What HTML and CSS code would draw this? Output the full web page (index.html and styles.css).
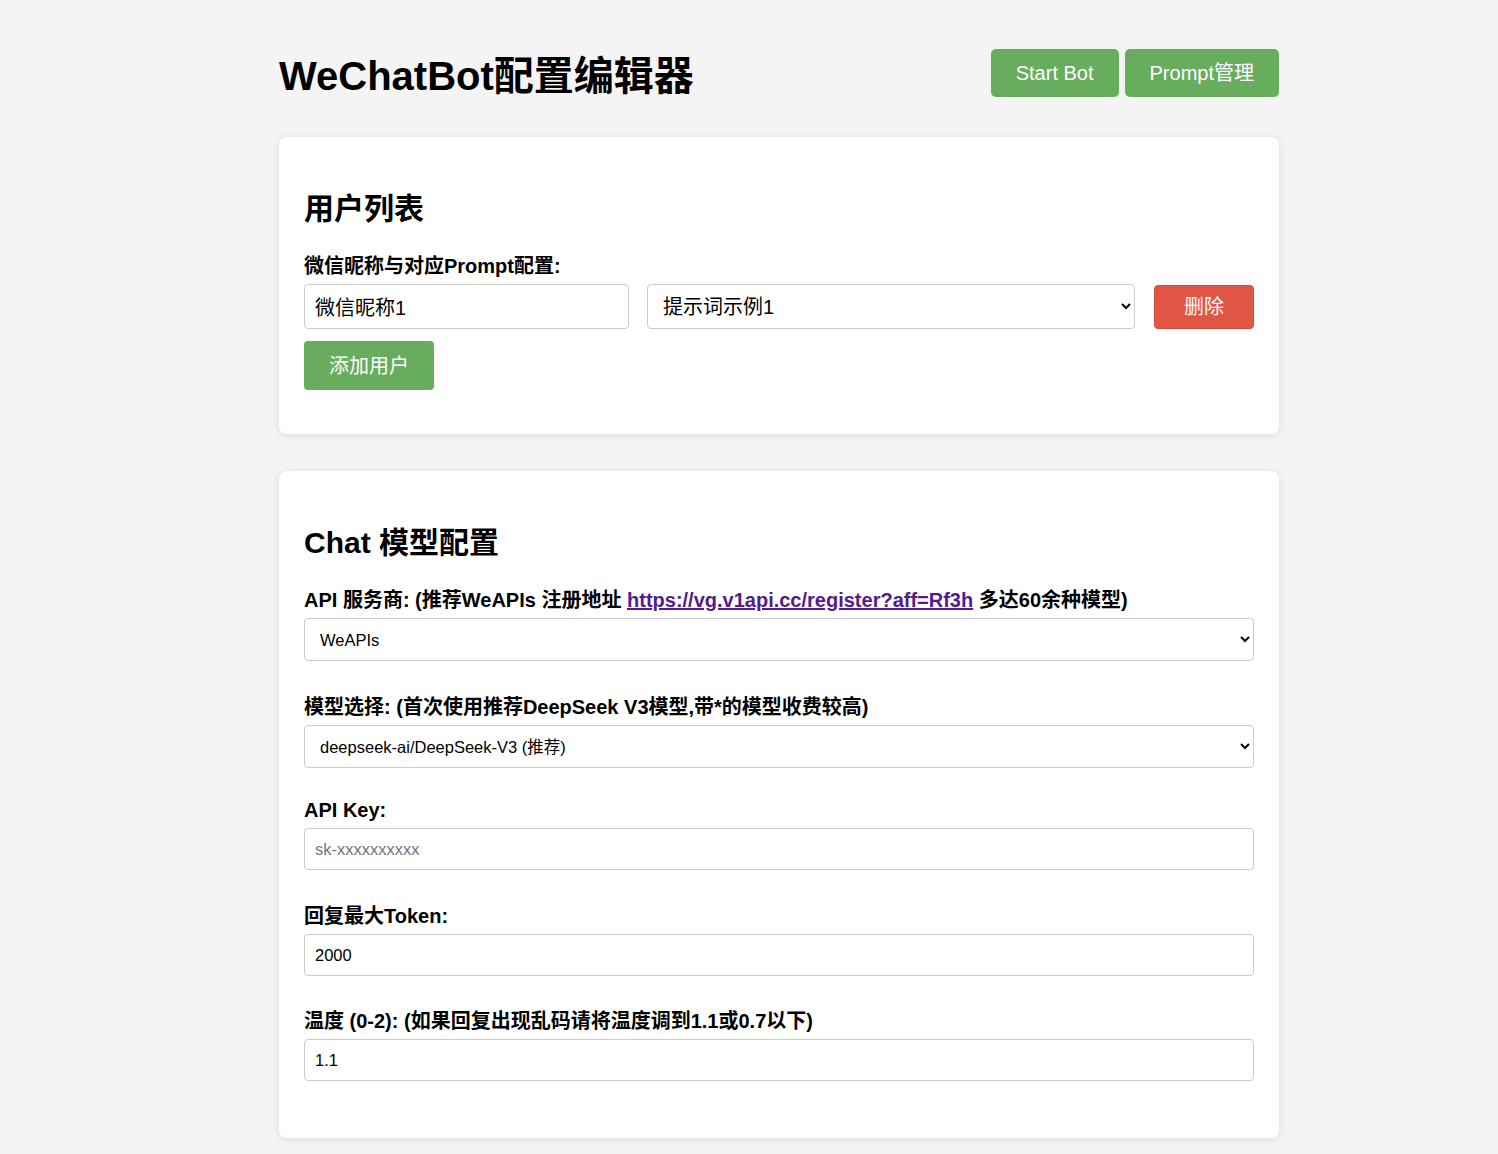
FILE: index.html
```html
<!DOCTYPE html>
<html lang="zh-CN">
<head>
<meta charset="UTF-8">
<title>WeChatBot配置编辑器</title>
<link rel="stylesheet" href="styles.css">
</head>
<body>
<div class="container">
  <header class="header">
    <h1 class="title">WeChatBot配置编辑器</h1>
    <div class="header-actions">
      <button class="btn btn-green btn-header">Start Bot</button>
      <button class="btn btn-green btn-header">Prompt管理</button>
    </div>
  </header>

  <section class="card">
    <h2 class="card-title">用户列表</h2>
    <label class="field-label">微信昵称与对应Prompt配置:</label>
    <div class="user-row">
      <input class="field big name-input" type="text" value="微信昵称1">
      <select class="field big prompt-select">
        <option>提示词示例1</option>
      </select>
      <button class="btn btn-red btn-delete">删除</button>
    </div>
    <button class="btn btn-green btn-add">添加用户</button>
  </section>

  <section class="card">
    <h2 class="card-title">Chat 模型配置</h2>
    <div class="form-group">
      <label class="field-label">API 服务商: (推荐WeAPIs 注册地址 <a class="link" href="#">https://vg.v1api.cc/register?aff=Rf3h</a> 多达60余种模型)</label>
      <select class="field small select-wide">
        <option>WeAPIs</option>
      </select>
    </div>
    <div class="form-group tight">
      <label class="field-label">模型选择: (首次使用推荐DeepSeek V3模型,带*的模型收费较高)</label>
      <select class="field small select-wide">
        <option>deepseek-ai/DeepSeek-V3 (推荐)</option>
      </select>
    </div>
    <div class="form-group">
      <label class="field-label">API Key:</label>
      <input class="field small input-wide" type="text" placeholder="sk-xxxxxxxxxx">
    </div>
    <div class="form-group mid">
      <label class="field-label">回复最大Token:</label>
      <input class="field small input-wide" type="text" value="2000">
    </div>
    <div class="form-group last">
      <label class="field-label">温度 (0-2): (如果回复出现乱码请将温度调到1.1或0.7以下)</label>
      <input class="field small input-wide" type="text" value="1.1">
    </div>
  </section>
</div>
</body>
</html>
```

FILE: styles.css
```css
* {
  box-sizing: border-box;
}

body {
  margin: 0;
  padding: 0 0 40px 60px;
  background: #f4f4f4;
  font-family: "Liberation Sans", Arial, "Noto Sans CJK SC", sans-serif;
  color: #000;
}

.container {
  width: 1000px;
  margin: 0 auto;
  padding-top: 49px;
}

.header {
  display: flex;
  align-items: center;
  justify-content: space-between;
  height: 48px;
  margin-bottom: 40px;
}

.title {
  margin: 0;
  padding-top: 6px;
  font-size: 40px;
  font-weight: bold;
  line-height: 48px;
}

.header-actions {
  display: flex;
  gap: 6px;
}

.btn {
  border: none;
  color: #fff;
  font-family: "Liberation Sans", Arial, "Noto Sans CJK SC", sans-serif;
  font-size: 20px;
  cursor: pointer;
  border-radius: 4px;
  padding: 0 25px;
  line-height: 1;
}

.btn-green {
  background: #68ad5e;
}

.btn-red {
  background: #e15544;
  border: 1px solid #d04d3e;
}

.btn-header {
  height: 48px;
  border-radius: 5px;
}

.card {
  background: #fff;
  border-radius: 8px;
  box-shadow: 0 1px 8px rgba(0, 0, 0, 0.1);
  padding: 25px;
  margin-bottom: 37px;
}

.card-title {
  margin: 25px 0 24px;
  font-size: 30px;
  line-height: 43px;
  font-weight: bold;
}

.field-label {
  display: block;
  font-size: 20px;
  font-weight: bold;
  line-height: 24px;
  margin-bottom: 6px;
}

.link {
  color: #551a8b;
  text-decoration: underline;
}

.field {
  border: 1px solid #ccc;
  border-radius: 4px;
  background: #fff;
  color: #000;
  font-family: "Liberation Sans", Arial, "Noto Sans CJK SC", sans-serif;
  padding: 0 10px;
  outline: none;
}

.field.big {
  font-size: 20px;
  height: 45px;
}

.field.small {
  font-size: 16.5px;
  height: 42px;
}

select.field.small {
  height: 43px;
  padding-left: 11px;
  padding-right: 8px;
}

.field::placeholder {
  color: #757575;
}

.user-row {
  display: flex;
  align-items: center;
}

.name-input {
  width: 325px;
  margin-right: 18px;
}

.prompt-select {
  width: 488px;
  margin-right: 19px;
  padding-left: 11px;
}

.btn-delete {
  width: 100px;
  height: 44px;
  padding: 0;
}

.btn-add {
  display: block;
  margin-top: 12px;
  margin-bottom: 19px;
  height: 49px;
  width: 130px;
  padding: 0;
}

.form-group {
  margin-bottom: 34px;
}

.form-group.tight {
  margin-bottom: 30px;
}

.form-group.mid {
  margin-bottom: 33px;
}

.form-group.last {
  margin-bottom: 32px;
}

.select-wide,
.input-wide {
  display: block;
  width: 100%;
}
```
